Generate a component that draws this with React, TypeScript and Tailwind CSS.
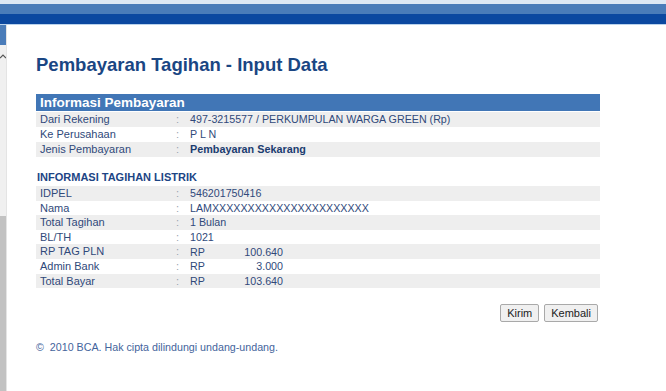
import React from 'react';

type Row = { label: string; value: React.ReactNode; bold?: boolean };

const pembayaran: Row[] = [
  { label: 'Dari Rekening', value: '497-3215577 / PERKUMPULAN WARGA GREEN (Rp)' },
  { label: 'Ke Perusahaan', value: 'P L N' },
  { label: 'Jenis Pembayaran', value: 'Pembayaran Sekarang', bold: true },
];

const Amount = ({ n }: { n: string }) => (
  <span className="flex">
    <span className="w-[40px]">RP</span>
    <span className="w-[53px] text-right">{n}</span>
  </span>
);

const tagihan: Row[] = [
  { label: 'IDPEL', value: '546201750416' },
  { label: 'Nama', value: 'LAMXXXXXXXXXXXXXXXXXXXXXX' },
  { label: 'Total Tagihan', value: '1 Bulan' },
  { label: 'BL/TH', value: '1021' },
  { label: 'RP TAG PLN', value: <Amount n="100.640" /> },
  { label: 'Admin Bank', value: <Amount n="3.000" /> },
  { label: 'Total Bayar', value: <Amount n="103.640" /> },
];

const DataRow = ({ row, i, h }: { row: Row; i: number; h: string }) => (
  <div className={`flex items-center ${h} ${i % 2 === 0 ? 'bg-[#eeeeee]' : 'bg-white'}`}>
    <span className="w-[140px] pl-[4px]">{row.label}</span>
    <span className="w-[14px] text-[#9aa3b0]">:</span>
    <span className={row.bold ? 'font-bold text-[10.8px] text-[#1b3c70]' : 'text-[10.7px]'}>{row.value}</span>
  </div>
);

export default function App() {
  return (
    <div className="w-[666px] h-[391px] overflow-hidden bg-white flex flex-col font-['Liberation_Sans',Arial,sans-serif]">
      {/* top bands */}
      <div className="h-[4px] bg-[#dde8f4]" />
      <div className="h-[10px] bg-[#4a7cb9]" />
      <div className="h-[10px] bg-[#0b48a0]" />
      <div className="h-[1px] bg-[#b9d2ec]" />

      <div className="flex flex-1">
        {/* left frame scrollbar */}
        <div className="w-[7px] flex flex-col border-r border-[#e4e4e4]">
          <div className="h-[20px] bg-[#4a7cb9]" />
          <div className="h-[171px] bg-[#f0f0f0] pt-[9px]">
            <svg width="6" height="5" viewBox="0 0 6 5">
              <path d="M0 4 L3 1 L6 4" fill="none" stroke="#555" strokeWidth="1.2" />
            </svg>
          </div>
          <div className="flex-1 bg-[#c2c2c2]" />
        </div>

        {/* main */}
        <div className="pl-[29px] pt-[29px] w-[594px]">
          <h1 className="text-[18.5px] leading-[21px] font-bold text-[#1a4683]">
            Pembayaran Tagihan - Input Data
          </h1>

          <div className="mt-[19px] w-[564px] text-[11px] text-[#30497a]">
            <div className="h-[17px] bg-[#4176b6] text-white font-bold text-[13.5px] leading-[17px] pl-[4px]">
              Informasi Pembayaran
            </div>
            <div className="mt-[1px]">
              {pembayaran.map((r, i) => (
                <DataRow key={r.label} row={r} i={i} h="h-[15px]" />
              ))}
            </div>

            <div className="mt-[13px] h-[14px] leading-[14px] font-bold text-[#1d4585] pl-[1px]">
              INFORMASI TAGIHAN LISTRIK
            </div>
            <div className="mt-[2px]">
              {tagihan.map((r, i) => (
                <DataRow key={r.label} row={r} i={i} h="h-[14.6px]" />
              ))}
            </div>

            <div className="mt-[16px] flex justify-end gap-[5px] pr-[2px]">
              <button className="h-[18px] px-[6px] text-[11px] leading-[16px] text-[#222] bg-[#f0f0f0] border border-[#a9a9a9] rounded-[2px]">
                Kirim
              </button>
              <button className="h-[18px] px-[6px] text-[11px] leading-[16px] text-[#222] bg-[#f0f0f0] border border-[#a9a9a9] rounded-[2px]">
                Kembali
              </button>
            </div>

            <div className="mt-[17px] text-[10.7px] text-[#44649c]">
              ©&nbsp; 2010 BCA. Hak cipta dilindungi undang-undang.
            </div>
          </div>
        </div>
      </div>
    </div>
  );
}
